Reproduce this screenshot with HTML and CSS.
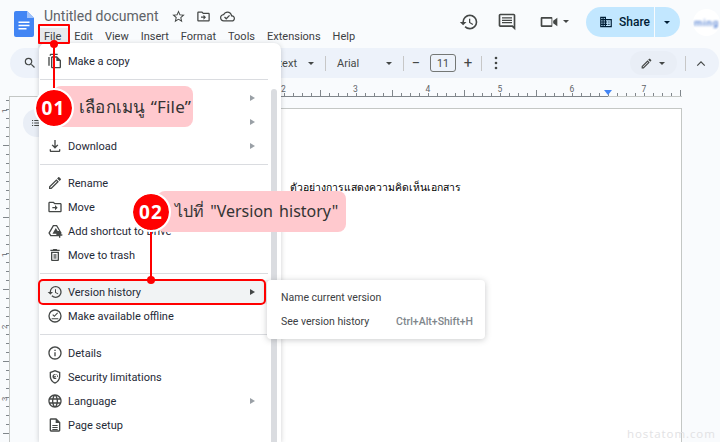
FILE: index.html
```html
<!DOCTYPE html>
<html lang="th">
<head>
<meta charset="utf-8">
<title>Untitled document</title>
<link rel="stylesheet" href="styles.css">
</head>
<body>
<div class="app">
  <header class="header">
    <svg class="logo" viewBox="0 0 20 26"><path fill="#4285f4" d="M2 0h11l7 7v17a2 2 0 0 1-2 2H2a2 2 0 0 1-2-2V2a2 2 0 0 1 2-2z"/><path fill="#a1c2fa" d="M13 0l7 7h-7z"/><path fill="#fff" d="M4.500 10.500h11v1.500h-11zM4.500 13.800h11v1.500h-11zM4.500 17.100h8v1.500h-8z"/></svg>
    <div class="titles">
      <div class="title-row">
        <span class="doc-title">Untitled document</span>
        <svg class="ticon" viewBox="0 0 24 24"><path d="M22 9.240l-7.190-.62L12 2 9.190 8.630 2 9.240l5.460 4.730L5.820 21 12 17.270 18.180 21l-1.630-7.030L22 9.240zM12 15.400l-3.760 2.270 1-4.280-3.320-2.880 4.380-.38L12 6.100l1.710 4.040 4.380.38-3.320 2.880 1 4.280L12 15.400z"/></svg>
        <svg class="ticon" viewBox="0 0 24 24"><path d="M20 6h-8l-2-2H4c-1.100 0-2 .9-2 2v12c0 1.100.9 2 2 2h16c1.100 0 2-.9 2-2V8c0-1.100-.9-2-2-2zm0 12H4V6h5.170l2 2H20v10zM12.010 12H8v2h4.010v3L16 13l-3.990-4z"/></svg>
        <svg class="ticon" viewBox="0 0 24 24"><path d="M19.350 10.040C18.670 6.590 15.640 4 12 4 9.110 4 6.600 5.640 5.350 8.040 2.340 8.360 0 10.910 0 14c0 3.310 2.690 6 6 6h13c2.760 0 5-2.240 5-5 0-2.640-2.050-4.780-4.650-4.960zM19 18H6c-2.210 0-4-1.790-4-4 0-2.050 1.530-3.760 3.560-3.970l1.070-.11.5-.95C8.080 7.140 9.940 6 12 6c2.620 0 4.880 1.860 5.390 4.430l.3 1.500 1.530.11c1.560.1 2.780 1.410 2.780 2.960 0 1.650-1.350 3-3 3zm-9-3.820l-2.090-2.090L6.500 13.500 10 17l6.010-6.010-1.410-1.410z"/></svg>
      </div>
      <nav class="menubar">
        <span class="mi mi-active">File</span><span class="mi">Edit</span><span class="mi">View</span><span class="mi">Insert</span><span class="mi">Format</span><span class="mi">Tools</span><span class="mi">Extensions</span><span class="mi">Help</span>
      </nav>
    </div>
    <div class="actions">
      <svg class="aicon" viewBox="0 0 24 24"><path d="M13 3a9 9 0 0 0-9 9H1l3.890 3.890.07.14L9 12H6c0-3.870 3.130-7 7-7s7 3.130 7 7-3.130 7-7 7c-1.930 0-3.680-.79-4.940-2.060l-1.420 1.420A8.954 8.954 0 0 0 13 21a9 9 0 0 0 0-18zm-1 5v5l4.280 2.540.72-1.210-3.500-2.080V8H12z"/></svg>
      <svg class="aicon" viewBox="0 0 24 24"><path d="M20 17.170 18.830 16H4V4h16v13.170zM20 2H4c-1.100 0-2 .9-2 2v12c0 1.100.9 2 2 2h14l4 4V4c0-1.100-.9-2-2-2zM6 12h12v1.500H6zM6 9.200h12v1.500H6zM6 6.400h12v1.500H6z"/></svg>
      <div class="meet">
        <svg class="aicon" viewBox="0 0 24 24"><path d="M15 8v8H4V8h11m1-2H3.500c-.8 0-1.500.7-1.500 1.500v9c0 .8.7 1.500 1.500 1.500H15c.6 0 1-.4 1-1V7c0-.6-.4-1-1-1zM17 10.500l5-3.500v10l-5-3.500z"/></svg>
        <span class="caret"></span>
      </div>
      <div class="share">
        <div class="share-main">
          <svg class="share-icon" viewBox="0 0 24 24"><path d="M12 7V3H2v18h20V7H12zM6 19H4v-2h2v2zm0-4H4v-2h2v2zm0-4H4V9h2v2zm0-4H4V5h2v2zm4 12H8v-2h2v2zm0-4H8v-2h2v2zm0-4H8V9h2v2zm0-4H8V5h2v2zm10 12h-8v-2h2v-2h-2v-2h2v-2h-2V9h8v10zm-2-8h-2v2h2v-2zm0 4h-2v2h2v-2z"/></svg>
          <span>Share</span>
        </div>
        <div class="share-drop"><span class="caret caret-dark"></span></div>
      </div>
      <div class="avatar"><span class="avatar-text">ming</span></div>
    </div>
  </header>

  <div class="toolbar">
    <svg class="search" viewBox="0 0 24 24"><path d="M15.500 14h-.79l-.28-.27A6.471 6.471 0 0 0 16 9.500 6.500 6.500 0 1 0 9.500 16c1.610 0 3.090-.59 4.230-1.570l.27.28v.79l5 4.990L20.490 19l-4.990-5zm-6 0C7.010 14 5 11.990 5 9.500S7.010 5 9.500 5 14 7.010 14 9.500 11.990 14 9.500 14z"/></svg>
    <span class="tb-style">Normal text</span>
    <span class="caret caret-style"></span>
    <span class="tb-sep sep-a"></span>
    <span class="tb-font">Arial</span>
    <span class="caret caret-font"></span>
    <span class="tb-sep sep-b"></span>
    <span class="tb-glyph tb-minus">&minus;</span>
    <span class="size-box">11</span>
    <span class="tb-glyph tb-plus">+</span>
    <span class="tb-sep sep-c"></span>
    <svg class="tb-dots" viewBox="0 0 4 14"><circle cx="2" cy="2" r="1.300"/><circle cx="2" cy="7" r="1.300"/><circle cx="2" cy="12" r="1.300"/></svg>
    <div class="mode-chip">
      <svg class="pencil" viewBox="0 0 24 24"><path d="M14.060 9.020l.92.92L5.920 19H5v-.92l9.060-9.060M17.660 3c-.25 0-.51.1-.7.29l-1.830 1.830 3.750 3.750 1.830-1.830a.996.996 0 0 0 0-1.410l-2.340-2.340c-.2-.2-.45-.29-.71-.29zm-3.600 3.190L3 17.250V21h3.750L17.810 9.940l-3.750-3.750z"/></svg>
      <span class="caret"></span>
    </div>
    <span class="tb-sep sep-d"></span>
    <svg class="chevron" viewBox="0 0 12 8"><path d="M1.500 6.500 6 2l4.500 4.500" fill="none" stroke="#444746" stroke-width="1.400"/></svg>
  </div>

  <svg class="hruler" width="720" height="19" viewBox="0 0 720 19">
    <defs>
      <pattern id="hticks" x="284" y="0" width="72" height="19" patternUnits="userSpaceOnUse">
        <path d="M.5 15v3M9.500 15v3M18.500 15v3M27.500 15v3M36.500 12v6M45.500 15v3M54.500 15v3M63.500 15v3" stroke="#80868b" fill="none"/>
      </pattern>
    </defs>
    <rect x="281" y="0" width="400" height="18" fill="url(#hticks)"/>
    <path d="M9 18.500h272" stroke="#c4c7c5"/>
    <path d="M281 18.500h327" stroke="#80868b"/>
    <path d="M608 18.500h74" stroke="#c4c7c5"/>
    <path d="M680.500 12v6" stroke="#80868b"/>
    <g class="rnum">
      <text x="283.500" y="14">2</text><text x="355.500" y="14">3</text><text x="428" y="14">4</text><text x="500" y="14">5</text><text x="572" y="14">6</text><text x="644" y="14">7</text>
    </g>
    <path d="M604 12h8l-4 5z" fill="#4285f4"/>
  </svg>

  <div class="canvas">
    <svg class="vruler" width="10" height="345" viewBox="0 0 10 345">
      <defs>
        <pattern id="vticks" x="0" y="12" width="10" height="72" patternUnits="userSpaceOnUse">
          <path d="M6 .5h3M6 9.500h3M6 18.500h3M6 27.500h3M3 36.500h6M6 45.500h3M6 54.500h3M6 63.500h3" stroke="#80868b" fill="none"/>
        </pattern>
      </defs>
      <rect x="0" y="0" width="9" height="345" fill="url(#vticks)"/>
      <path d="M9.500 0v345" stroke="#c4c7c5"/>
      <g class="rnum rnum-v">
        <text transform="translate(6.500 14) rotate(-90)">1</text>
        <text transform="translate(6.500 158) rotate(-90)">1</text>
        <text transform="translate(6.500 230) rotate(-90)">2</text>
        <text transform="translate(6.500 302) rotate(-90)">3</text>
      </g>
    </svg>
    <div class="workspace">
      <div class="outline-chip">
        <svg class="outline-icon" viewBox="0 0 12 10"><path d="M0 1h1.500v1.200H0zM3 1h9v1.200H3zM0 4.400h1.500v1.200H0zM3 4.400h9v1.200H3zM0 7.800h1.500V9H0zM3 7.800h9V9H3z"/></svg>
      </div>
      <div class="page">
        <p class="page-text">ตัวอย่างการแสดงความคิดเห็นเอกสาร</p>
      </div>
    </div>
  </div>

  <div class="file-menu">
    <div class="row"><svg class="ricon" viewBox="0 0 24 24"><path d="M16 1H6c-1.100 0-2 .9-2 2v1h2V3h10zM15 5H8c-1.100 0-2 .9-2 2v14c0 1.100.9 2 2 2h11c1.100 0 2-.9 2-2V11zM8 21V7h6v5h5v9z"/><path d="M2 6h2v13H2z"/></svg><span class="label">Make a copy</span></div>
    <hr class="sep">
    <div class="row"><span class="arrow"></span></div>
    <div class="row"><span class="arrow"></span></div>
    <div class="row"><svg class="ricon" viewBox="0 0 24 24"><path d="M18 17v2H6v-2H4v2c0 1.100.9 2 2 2h12c1.100 0 2-.9 2-2v-2zM17 11l-1.410-1.410L13 12.170V3h-2v9.170L8.410 9.590 7 11l5 5z"/></svg><span class="label">Download</span><span class="arrow"></span></div>
    <hr class="sep">
    <div class="row"><svg class="ricon" viewBox="0 0 24 24"><path d="M14.060 9.020l.92.92L5.920 19H5v-.92l9.060-9.060M17.660 3c-.25 0-.51.1-.7.29l-1.830 1.830 3.750 3.750 1.830-1.830a.996.996 0 0 0 0-1.410l-2.340-2.340c-.2-.2-.45-.29-.71-.29zm-3.600 3.190L3 17.250V21h3.750L17.810 9.940l-3.750-3.750z"/></svg><span class="label">Rename</span></div>
    <div class="row"><svg class="ricon" viewBox="0 0 24 24"><path d="M20 6h-8l-2-2H4c-1.100 0-2 .9-2 2v12c0 1.100.9 2 2 2h16c1.100 0 2-.9 2-2V8c0-1.100-.9-2-2-2zm0 12H4V6h5.170l2 2H20v10zM12.010 12H8v2h4.010v3L16 13l-3.990-4z"/></svg><span class="label">Move</span></div>
    <div class="row"><svg class="ricon" viewBox="0 0 24 24"><path d="M9 3h6l7 12-3 5H5l-3-5zM10.200 5 4.400 15l1.800 3h7.800v-2H8.200l5-8.500L16 12h2.300L13.900 5z"/><path d="M18 14h2v3h3v2h-3v3h-2v-3h-3v-2h3z"/></svg><span class="label">Add shortcut to Drive</span></div>
    <div class="row"><svg class="ricon" viewBox="0 0 24 24"><path d="M6 19c0 1.100.9 2 2 2h8c1.100 0 2-.9 2-2V7H6zM8 9h8v10H8zM15.500 4l-1-1h-5l-1 1H5v2h14V4zM10 10.500h1.500v7H10zM12.500 10.500H14v7h-1.500z"/></svg><span class="label">Move to trash</span></div>
    <hr class="sep">
    <div class="row row-hover"><svg class="ricon" viewBox="0 0 24 24"><path d="M13 3a9 9 0 0 0-9 9H1l3.890 3.890.07.14L9 12H6c0-3.870 3.130-7 7-7s7 3.130 7 7-3.130 7-7 7c-1.930 0-3.680-.79-4.940-2.060l-1.420 1.420A8.954 8.954 0 0 0 13 21a9 9 0 0 0 0-18zm-1 5v5l4.280 2.540.72-1.210-3.500-2.080V8H12z"/></svg><span class="label">Version history</span><span class="arrow arrow-dark"></span></div>
    <div class="row"><svg class="ricon" viewBox="0 0 24 24"><path d="M12 2a10 10 0 1 0 0 20 10 10 0 0 0 0-20zm0 18a8 8 0 1 1 0-16 8 8 0 0 1 0 16zM7 15.500h10V17H7zM11 13.500l-3-3 1.100-1.100 1.900 1.900 4.400-4.400 1.100 1.100z"/></svg><span class="label">Make available offline</span></div>
    <hr class="sep">
    <div class="row"><svg class="ricon" viewBox="0 0 24 24"><path d="M11 7h2v2h-2zm0 4h2v6h-2zm1-9C6.480 2 2 6.480 2 12s4.480 10 10 10 10-4.480 10-10S17.520 2 12 2zm0 18c-4.410 0-8-3.590-8-8s3.590-8 8-8 8 3.590 8 8-3.590 8-8 8z"/></svg><span class="label">Details</span></div>
    <div class="row"><svg class="ricon" viewBox="0 0 24 24"><path d="M12 1.500 4 4.500v6.300c0 5 3.400 9.800 8 11.200 4.600-1.400 8-6.200 8-11.200V4.500zm6 9.300c0 4-2.600 7.800-6 9.100-3.400-1.300-6-5.100-6-9.100V5.900l6-2.250 6 2.250z"/><path d="M12 7.500a3.800 3.800 0 1 0 2 7v-1.400a2.500 2.500 0 1 1 1.300-2.100v1h1.200v-1A4.500 4.500 0 0 0 12 7.500zm0 2.500a1.300 1.300 0 1 1 0 2.600 1.300 1.300 0 0 1 0-2.600z"/></svg><span class="label">Security limitations</span></div>
    <div class="row"><svg class="ricon" viewBox="0 0 24 24"><path d="M11.990 2C6.470 2 2 6.480 2 12s4.470 10 9.990 10C17.520 22 22 17.520 22 12S17.520 2 11.990 2zm6.930 6h-2.950a15.650 15.650 0 0 0-1.380-3.560A8.030 8.030 0 0 1 18.920 8zM12 4.040c.83 1.200 1.480 2.530 1.910 3.960h-3.820c.43-1.430 1.080-2.760 1.910-3.960zM4.260 14C4.100 13.360 4 12.690 4 12s.1-1.360.26-2h3.380c-.08.66-.14 1.320-.14 2s.06 1.340.14 2H4.260zm.82 2h2.950c.32 1.250.78 2.450 1.380 3.560A7.987 7.987 0 0 1 5.080 16zm2.950-8H5.080a7.987 7.987 0 0 1 4.330-3.560A15.650 15.650 0 0 0 8.030 8zM12 19.960c-.83-1.200-1.480-2.530-1.910-3.960h3.820c-.43 1.430-1.080 2.760-1.910 3.960zM14.340 14H9.660c-.09-.66-.16-1.320-.16-2s.07-1.350.16-2h4.680c.09.65.16 1.320.16 2s-.07 1.340-.16 2zm.25 5.560c.6-1.110 1.060-2.310 1.380-3.560h2.950a8.030 8.030 0 0 1-4.330 3.560zM16.360 14c.08-.66.14-1.320.14-2s-.06-1.340-.14-2h3.380c.16.64.26 1.310.26 2s-.1 1.360-.26 2h-3.380z"/></svg><span class="label">Language</span><span class="arrow"></span></div>
    <div class="row"><svg class="ricon" viewBox="0 0 24 24"><path d="M14 2H6c-1.100 0-2 .9-2 2v16c0 1.100.9 2 2 2h12c1.100 0 2-.9 2-2V8zm4 18H6V4h7v5h5zM8 12h8v1.400H8zM8 15h8v1.400H8zM8 18h8v1.400H8z"/></svg><span class="label">Page setup</span></div>
    <span class="menu-scroll"></span>
  </div>

  <div class="submenu">
    <div class="sub-row"><span>Name current version</span></div>
    <div class="sub-row"><span>See version history</span><span class="shortcut">Ctrl+Alt+Shift+H</span></div>
  </div>

  <div class="mark-box mark-file"></div>
  <div class="mark-box mark-version"></div>
  <span class="wire wire-1"></span>
  <span class="wire wire-2"></span>
  <span class="dot dot-1"></span>
  <span class="dot dot-2"></span>

  <div class="pill pill-1">เลือกเมนู “File”</div>
  <div class="badge badge-1">01</div>
  <div class="pill pill-2">ไปที่ "Version history"</div>
  <div class="badge badge-2">02</div>

  <span class="watermark">hostatom.com</span>
</div>
</body>
</html>
```
FILE: styles.css
```css
* { box-sizing: border-box; }
html, body { margin: 0; padding: 0; }
body {
  width: 720px;
  height: 442px;
  overflow: hidden;
  background: #f9fbfd;
  font-family: Roboto, "Noto Sans", sans-serif;
  color: #1f1f1f;
}
.app {
  position: relative;
  width: 720px;
  height: 442px;
  overflow: hidden;
  display: flex;
  flex-direction: column;
}

/* Header */
.header {
  height: 48px;
  display: flex;
  flex: none;
}
.logo {
  width: 20px;
  height: 26px;
  margin: 11px 0 0 14px;
  flex: none;
}
.titles {
  margin-left: 10px;
  padding-top: 6px;
}
.title-row {
  display: flex;
  align-items: center;
  height: 20px;
}
.doc-title {
  font-size: 14px;
  color: #5f6368;
  margin-right: 12.500px;
}
.ticon {
  width: 15px;
  height: 15px;
  margin-right: 9.500px;
  fill: #444746;
}
.menubar {
  display: flex;
  margin: 2px 0 0 -6px;
  font-size: 11px;
  height: 20px;
  line-height: 18px;
  color: #3c4043;
}
.mi { padding: 0 6px; }
.mi-active { background: #e8eaed; padding: 0 7px 0 6px; }

.actions {
  margin-left: auto;
  display: flex;
  align-items: flex-start;
  padding-top: 7px;
}
.aicon {
  width: 20px;
  height: 20px;
  fill: #444746;
  margin-top: 5px;
  flex: none;
}
.actions > .aicon:first-child { margin-right: 18px; }
.meet {
  display: flex;
  margin-left: 22px;
  width: 47px;
  gap: 4px;
}
.meet .caret { margin-top: 13px; }
.caret {
  display: inline-block;
  width: 0;
  height: 0;
  border-left: 3.500px solid transparent;
  border-right: 3.500px solid transparent;
  border-top: 3.500px solid #444746;
  flex: none;
}
.caret-dark { border-top-color: #001d35; }
.share {
  width: 94px;
  height: 30px;
  display: flex;
  border-radius: 15px;
  background: #c2e7ff;
  overflow: hidden;
  color: #001d35;
}
.share-main {
  width: 69px;
  display: flex;
  align-items: center;
  padding-left: 13px;
  gap: 6px;
  border-right: 1px solid #f9fbfd;
  font-size: 12px;
  font-weight: 500;
}
.share-icon { width: 14px; height: 14px; fill: #001d35; }
.share-drop {
  flex: 1;
  display: flex;
  align-items: center;
  justify-content: center;
  padding-right: 2px;
}
.avatar {
  width: 27px;
  height: 27px;
  margin: 2px 0 0 13px;
  border-radius: 50%;
  background: #fff;
  display: flex;
  align-items: center;
  justify-content: center;
  overflow: hidden;
}
.avatar-text {
  font-size: 9.500px;
  letter-spacing: 1px;
  color: #1a56c4;
  filter: blur(1px);
}

/* Toolbar */
.toolbar {
  height: 30px;
  flex: none;
  margin: 0 1px 0 10px;
  background: #edf2fa;
  border-radius: 15px;
  display: flex;
  align-items: center;
  font-size: 11px;
  color: #444746;
}
.search { width: 14px; height: 14px; margin-left: 13px; fill: #444746; flex: none; }
.tb-style {
  margin-left: 202px;
  width: 58px;
  display: flex;
  justify-content: flex-end;
  white-space: nowrap;
  flex: none;
}
.caret-style { margin-left: 11px; }
.tb-sep { width: 1px; height: 15px; background: #c7c7c7; flex: none; }
.sep-a { margin-left: 11px; }
.tb-font { margin-left: 11px; width: 49px; flex: none; }
.caret-font { margin-left: 0; }
.sep-b { margin-left: 11px; }
.tb-glyph { font-size: 15px; width: 12px; text-align: center; flex: none; color: #444746; }
.tb-minus { margin-left: 6px; }
.size-box {
  width: 26px;
  height: 18px;
  margin-left: 8px;
  border: 1px solid #747775;
  border-radius: 3px;
  display: flex;
  align-items: center;
  justify-content: center;
  font-size: 10.500px;
  flex: none;
}
.tb-plus { margin-left: 6px; }
.sep-c { margin-left: 7px; }
.tb-dots { width: 4px; height: 14px; margin-left: 12px; fill: #444746; flex: none; }
.mode-chip {
  width: 47px;
  height: 24px;
  margin-left: 132px;
  background: #e9eef6;
  border-radius: 12px;
  display: flex;
  align-items: center;
  padding-left: 10px;
  gap: 6px;
  flex: none;
}
.pencil { width: 13px; height: 13px; fill: #444746; }
.sep-d { margin-left: 8px; }
.chevron { width: 10px; height: 7px; margin-left: 10px; flex: none; }

/* Rulers */
.hruler { display: block; flex: none; }
.rnum text {
  font-family: Roboto, sans-serif;
  font-size: 8.500px;
  fill: #5f6368;
  text-anchor: middle;
}
.rnum-v text { font-size: 7.500px; }

/* Canvas */
.canvas {
  flex: 1;
  display: flex;
  min-height: 0;
}
.vruler { display: block; flex: none; }
.workspace {
  flex: 1;
  display: flex;
  padding: 11px 38px 0 0;
  min-width: 0;
}
.outline-chip {
  width: 32px;
  height: 28px;
  margin: 1px 0 0 13px;
  border-radius: 14px;
  background: #e9eef6;
  display: flex;
  align-items: center;
  padding-left: 9px;
  flex: none;
  margin-right: -15px;
}
.outline-icon { width: 9px; height: 8px; fill: #444746; }
.page {
  flex: 1;
  background: #fff;
  border-top: 1px solid #c4c7c5;
  border-right: 1px solid #c4c7c5;
  padding: 70px 0 0 250px;
}
.page-text {
  margin: 0;
  font-family: "Noto Sans", sans-serif;
  font-size: 10.400px;
  line-height: 16px;
  font-weight: 500;
  color: #000;
  white-space: nowrap;
}

/* File menu (overlay) */
.file-menu {
  position: absolute;
  left: 39px;
  top: 43px;
  width: 242px;
  height: 399px;
  padding-top: 6px;
  background: #fff;
  border-radius: 7px 7px 0 0;
  box-shadow: 0 1px 5px rgba(60, 64, 67, .25);
  font-size: 11px;
  color: #1f2a37;
}
.row {
  height: 24px;
  display: flex;
  align-items: center;
  padding-left: 8px;
  position: relative;
}
.row-hover { background: #f1f3f4; }
.ricon { width: 16px; height: 16px; fill: #444746; flex: none; }
.label { margin-left: 5px; white-space: nowrap; }
.arrow {
  position: absolute;
  left: 211px;
  top: 9px;
  width: 0;
  height: 0;
  border-left: 5px solid #9aa0a6;
  border-top: 3px solid transparent;
  border-bottom: 3px solid transparent;
}
.arrow-dark { border-left-color: #444746; }
.sep {
  height: 1px;
  margin: 6px 13px 6px 1px;
  border: 0;
  background: #dadce0;
}
.menu-scroll {
  position: absolute;
  left: 232px;
  top: 46px;
  width: 6px;
  bottom: 0;
  background: #dadce0;
  border-radius: 3px 3px 0 0;
}

/* Submenu (overlay) */
.submenu {
  position: absolute;
  left: 267px;
  top: 280px;
  width: 218px;
  height: 59px;
  padding: 5px 12px 0 14px;
  background: #fff;
  border-radius: 4px;
  box-shadow: 0 1px 6px rgba(60, 64, 67, .28);
  font-size: 10.500px;
  color: #3c4043;
}
.sub-row {
  height: 24px;
  display: flex;
  align-items: center;
  justify-content: space-between;
}
.shortcut { color: #80868b; font-weight: 500; }

/* Callouts */
.mark-box { position: absolute; border: 2px solid #f00; }
.mark-file { left: 38px; top: 24px; width: 32px; height: 20px; border-radius: 1px; }
.mark-version { left: 38px; top: 279px; width: 228px; height: 26px; border-radius: 5px; }
.wire { position: absolute; width: 2px; background: #f00; }
.wire-1 { left: 53px; top: 43px; height: 48px; }
.wire-2 { left: 150px; top: 228px; height: 52px; }
.dot { position: absolute; width: 8px; height: 8px; border-radius: 50%; background: #f00; }
.dot-1 { left: 50px; top: 40px; }
.dot-2 { left: 147px; top: 276px; }
.pill {
  position: absolute;
  height: 41px;
  display: flex;
  align-items: center;
  background: #ffc9ce;
  border-radius: 8px;
  color: #333;
  font-family: "Noto Sans", sans-serif;
  font-size: 17px;
  white-space: pre;
}
.pill-1 { left: 53px; top: 86px; width: 140px; padding-left: 26px; letter-spacing: .01em; word-spacing: 1px; }
.pill-2 { left: 157px; top: 191px; width: 189px; padding-left: 18px; font-size: 16px; word-spacing: 2px; }
.badge {
  position: absolute;
  width: 40px;
  height: 40px;
  display: flex;
  align-items: center;
  justify-content: center;
  border: 2px solid #fff;
  border-radius: 50%;
  background: #f00;
  background-clip: padding-box;
  color: #fff;
  font-family: "Open Sans", Roboto, sans-serif;
  font-weight: 700;
  font-size: 19px;
  letter-spacing: .06em;
}
.badge-1 { left: 33.500px; top: 87.500px; }
.badge-2 { left: 131px; top: 192px; }
.watermark {
  position: absolute;
  left: 627px;
  top: 426px;
  font-size: 11.500px;
  letter-spacing: .08em;
  color: #e2e2e4;
  font-family: "Open Sans", sans-serif;
}
```
